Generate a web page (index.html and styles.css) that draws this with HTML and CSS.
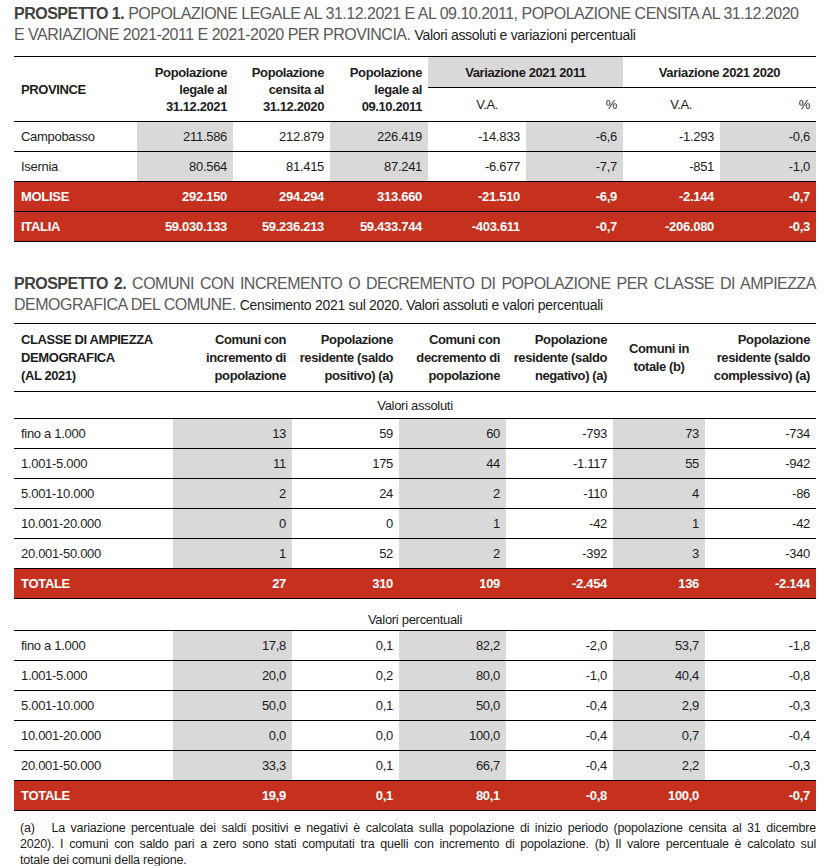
FILE: index.html
```html
<!DOCTYPE html>
<html lang="it">
<head>
<meta charset="utf-8">
<title>Prospetti Molise</title>
<link rel="stylesheet" href="styles.css">
</head>
<body>
<div class="page">
  <h2 class="title t1title"><span class="line"><b>PROSPETTO 1.</b> POPOLAZIONE LEGALE AL 31.12.2021 E AL 09.10.2011, POPOLAZIONE CENSITA AL 31.12.2020</span><span class="line">E VARIAZIONE 2021-2011 E 2021-2020 PER PROVINCIA. <span class="sub">Valori assoluti e variazioni percentuali</span></span></h2>

  <table class="tab tab1">
    <colgroup>
      <col class="w123"><col class="w96"><col class="w97"><col class="w98"><col class="w98"><col class="w97"><col class="w97"><col class="w96">
    </colgroup>
    <thead>
      <tr class="hr1">
        <th rowspan="2" class="l">PROVINCE</th>
        <th rowspan="2">Popolazione<br>legale al<br>31.12.2021</th>
        <th rowspan="2">Popolazione<br>censita al<br>31.12.2020</th>
        <th rowspan="2">Popolazione<br>legale al<br>09.10.2011</th>
        <th colspan="2" class="grp g">Variazione 2021 2011</th>
        <th colspan="2" class="grp">Variazione 2021 2020</th>
      </tr>
      <tr class="hr2">
        <th class="va">V.A.</th><th class="pc">%</th><th class="va">V.A.</th><th class="pc">%</th>
      </tr>
    </thead>
    <tbody>
      <tr><td class="l">Campobasso</td><td class="g">211.586</td><td>212.879</td><td class="g">226.419</td><td>-14.833</td><td class="g">-6,6</td><td>-1.293</td><td class="g">-0,6</td></tr>
      <tr><td class="l">Isernia</td><td class="g">80.564</td><td>81.415</td><td class="g">87.241</td><td>-6.677</td><td class="g">-7,7</td><td>-851</td><td class="g">-1,0</td></tr>
      <tr class="red"><td class="l">MOLISE</td><td>292.150</td><td>294.294</td><td>313.660</td><td>-21.510</td><td>-6,9</td><td>-2.144</td><td>-0,7</td></tr>
      <tr class="red"><td class="l">ITALIA</td><td>59.030.133</td><td>59.236.213</td><td>59.433.744</td><td>-403.611</td><td>-0,7</td><td>-206.080</td><td>-0,3</td></tr>
    </tbody>
  </table>

  <h2 class="title t2title"><span class="line just"><b>PROSPETTO 2.</b> COMUNI CON INCREMENTO O DECREMENTO DI POPOLAZIONE PER CLASSE DI AMPIEZZA</span><span class="line">DEMOGRAFICA DEL COMUNE. <span class="sub">Censimento 2021 sul 2020. Valori assoluti e valori percentuali</span></span></h2>

  <table class="tab tab2">
    <colgroup>
      <col class="w159"><col class="w119"><col class="w107"><col class="w107"><col class="w107"><col class="w92"><col class="w111">
    </colgroup>
    <thead>
      <tr>
        <th class="l">CLASSE DI AMPIEZZA<br>DEMOGRAFICA<br>(AL 2021)</th>
        <th>Comuni con<br>incremento di<br>popolazione</th>
        <th>Popolazione<br>residente (saldo<br>positivo) (a)</th>
        <th>Comuni con<br>decremento di<br>popolazione</th>
        <th>Popolazione<br>residente (saldo<br>negativo) (a)</th>
        <th class="c">Comuni in<br>totale (b)</th>
        <th>Popolazione<br>residente (saldo<br>complessivo) (a)</th>
      </tr>
    </thead>
    <tbody>
      <tr class="sec s1"><td colspan="7">Valori assoluti</td></tr>
      <tr><td class="l">fino a 1.000</td><td class="g">13</td><td>59</td><td class="g">60</td><td>-793</td><td class="g">73</td><td>-734</td></tr>
      <tr><td class="l">1.001-5.000</td><td class="g">11</td><td>175</td><td class="g">44</td><td>-1.117</td><td class="g">55</td><td>-942</td></tr>
      <tr><td class="l">5.001-10.000</td><td class="g">2</td><td>24</td><td class="g">2</td><td>-110</td><td class="g">4</td><td>-86</td></tr>
      <tr><td class="l">10.001-20.000</td><td class="g">0</td><td>0</td><td class="g">1</td><td>-42</td><td class="g">1</td><td>-42</td></tr>
      <tr><td class="l">20.001-50.000</td><td class="g">1</td><td>52</td><td class="g">2</td><td>-392</td><td class="g">3</td><td>-340</td></tr>
      <tr class="red"><td class="l">TOTALE</td><td>27</td><td>310</td><td>109</td><td>-2.454</td><td>136</td><td>-2.144</td></tr>
      <tr class="sec s2"><td colspan="7">Valori percentuali</td></tr>
      <tr><td class="l">fino a 1.000</td><td class="g">17,8</td><td>0,1</td><td class="g">82,2</td><td>-2,0</td><td class="g">53,7</td><td>-1,8</td></tr>
      <tr><td class="l">1.001-5.000</td><td class="g">20,0</td><td>0,2</td><td class="g">80,0</td><td>-1,0</td><td class="g">40,4</td><td>-0,8</td></tr>
      <tr><td class="l">5.001-10.000</td><td class="g">50,0</td><td>0,1</td><td class="g">50,0</td><td>-0,4</td><td class="g">2,9</td><td>-0,3</td></tr>
      <tr><td class="l">10.001-20.000</td><td class="g">0,0</td><td>0,0</td><td class="g">100,0</td><td>-0,4</td><td class="g">0,7</td><td>-0,4</td></tr>
      <tr><td class="l">20.001-50.000</td><td class="g">33,3</td><td>0,1</td><td class="g">66,7</td><td>-0,4</td><td class="g">2,2</td><td>-0,3</td></tr>
      <tr class="red"><td class="l">TOTALE</td><td>19,9</td><td>0,1</td><td>80,1</td><td>-0,8</td><td>100,0</td><td>-0,7</td></tr>
    </tbody>
  </table>

  <p class="note"><span class="nl">(a)&nbsp;&nbsp; La variazione percentuale dei saldi positivi e negativi è calcolata sulla popolazione di inizio periodo (popolazione censita al 31 dicembre</span><span class="nl">2020). I comuni con saldo pari a zero sono stati computati tra quelli con incremento di popolazione. (b) Il valore percentuale è calcolato sul</span><span class="nl last">totale dei comuni della regione.</span></p>
</div>
</body>
</html>
```

FILE: styles.css
```css
html, body {
  margin: 0;
  padding: 0;
  background: #fff;
}

body {
  font-family: "Liberation Sans", Arial, sans-serif;
  color: #1c1c1c;
  font-size: 13px;
  letter-spacing: -0.3px;
}

.page {
  width: 802px;
  padding: 3px 0 0 14px;
}

.title {
  margin: 0;
  font-weight: normal;
  font-size: 16px;
  letter-spacing: -0.5px;
  line-height: 21px;
  color: #595959;
}

.title b {
  color: #404040;
  font-weight: bold;
}

.title .line {
  display: block;
  white-space: nowrap;
}

.title .line.just {
  text-align: justify;
  text-align-last: justify;
}

.title .sub {
  font-size: 14px;
  letter-spacing: -0.3px;
  color: #1c1c1c;
}

.t1title {
  margin-bottom: 10px;
}

.t2title {
  margin-top: 31px;
  margin-bottom: 7px;
}

.tab {
  border-collapse: collapse;
  table-layout: fixed;
  width: 802px;
}

.w123 { width: 123px; }
.w96 { width: 96px; }
.w97 { width: 97px; }
.w98 { width: 98px; }
.w159 { width: 159px; }
.w119 { width: 119px; }
.w107 { width: 107px; }
.w92 { width: 92px; }
.w111 { width: 111px; }

.tab th,
.tab td {
  padding: 0 6px 0 7px;
  text-align: right;
  white-space: nowrap;
}

.tab th {
  font-weight: bold;
  line-height: 17px;
  vertical-align: middle;
  letter-spacing: -0.4px;
  padding-left: 2px;
}

.tab th.l {
  padding-left: 7px;
}

.tab .l {
  text-align: left;
}

.tab .c {
  text-align: center;
}

.tab thead tr:first-child th {
  border-top: 1px solid #000;
}

.tab thead tr:last-child th,
.tab thead th[rowspan] {
  border-bottom: 1px solid #000;
}

.tab1 .hr1 {
  height: 31px;
}

.tab1 .hr2 {
  height: 34px;
}

.tab1 .grp {
  text-align: center;
  border-bottom: 1px solid #000;
  padding: 0;
}

.tab1 .hr2 th {
  font-weight: normal;
}

.tab1 .hr2 .va {
  padding-right: 28px;
}

.tab td {
  height: 29px;
  border-bottom: 1px solid #000;
  line-height: 17px;
}

.tab .g {
  background: #d9d9d9;
}

.tab tr.red td {
  background: #c6311f;
  color: #fff;
  font-weight: bold;
}

.tab2 thead tr {
  height: 68px;
}

.tab2 thead th {
  line-height: 18px;
}

.tab2 thead th.c {
  padding: 0 4px 0 4px;
}

.tab2 .sec td {
  text-align: center;
  padding: 0;
}

.tab2 .s1 td {
  height: 26px;
  vertical-align: middle;
}

.tab2 .s2 td {
  height: 29px;
  vertical-align: bottom;
  padding-bottom: 2px;
  line-height: 17px;
}

.note {
  margin: 9px 0 0 0;
  padding: 0 0 0 6px;
  font-size: 12.5px;
  letter-spacing: -0.2px;
  line-height: 16px;
  color: #1c1c1c;
}

.note .nl {
  display: block;
  white-space: nowrap;
  text-align: justify;
  text-align-last: justify;
}

.note .nl.last {
  text-align-last: left;
}
```
